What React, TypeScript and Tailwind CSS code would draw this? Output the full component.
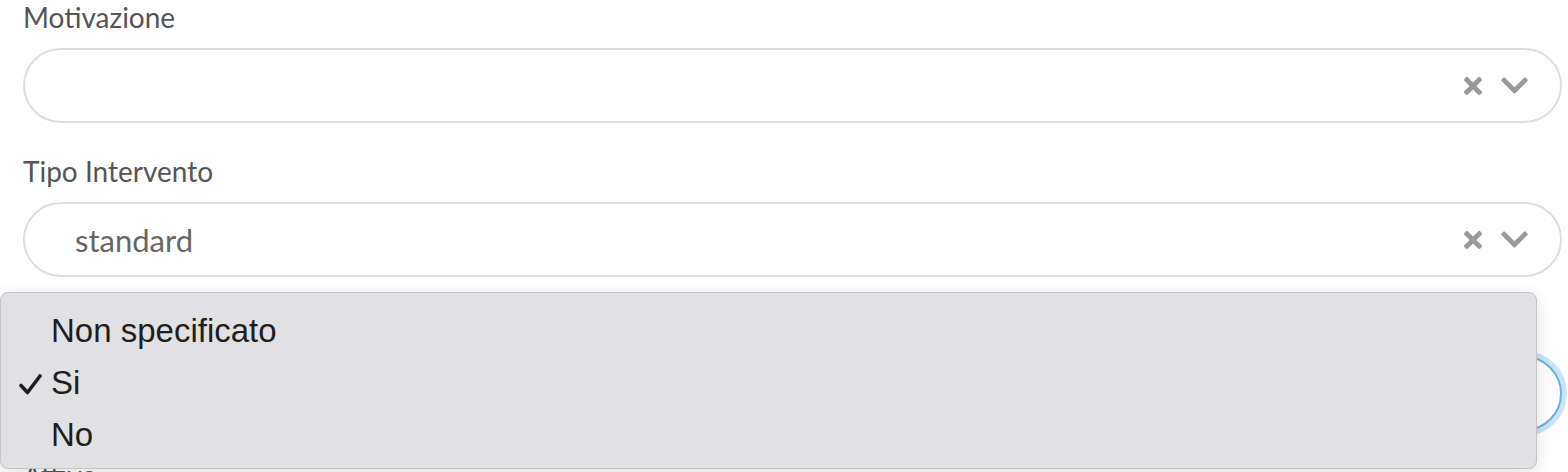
import { FaTimes, FaChevronDown } from 'react-icons/fa';

const lato = { fontFamily: 'Lato, "Open Sans", sans-serif' };

function SelectField({ label, value, focused }: { label: string; value?: string; focused?: boolean }) {
  return (
    <div className="mb-[31px]">
      <div className="text-[28px] leading-[34px] text-[#555] mb-[14px]">{label}</div>
      <div
        className={`h-[75px] rounded-full border-2 bg-white flex items-center pl-[50px] pr-[30px] ${
          focused ? 'border-[#6ab0e0] shadow-[0_0_0_5px_rgba(102,175,233,0.35)]' : 'border-[#dedede]'
        }`}
      >
        <span className="flex-1 text-[31px] text-[#666] pt-[2px]">{value}</span>
        {!focused && (
          <div className="flex items-center gap-[13px] text-[#999]">
            <FaTimes size={26} />
            <FaChevronDown size={31} />
          </div>
        )}
      </div>
    </div>
  );
}

export default function App() {
  return (
    <div className="relative w-[1568px] h-[472px] overflow-hidden bg-white" style={lato}>
      <div className="pl-[23px] pr-[6px]">
        <SelectField label="Motivazione" />
        <SelectField label="Tipo Intervento" value="standard" />
        <SelectField label="Attivo" focused />
        <div className="text-[28px] leading-[34px] text-[#555] -mt-[4px]">Attivo</div>
      </div>

      {/* native select menu */}
      <div
        className="absolute left-0 top-[292px] w-[1537px] h-[177px] rounded-[8px] bg-[#e1e1e3] border border-[#c4c4c4] shadow-[0_4px_18px_rgba(0,0,0,0.12)] pt-[12px] text-[#1e1e1e]"
        style={{ fontFamily: '"Liberation Sans", Arial, sans-serif' }}
      >
        {[
          { t: 'Non specificato', c: false },
          { t: 'Si', c: true },
          { t: 'No', c: false },
        ].map((o) => (
          <div key={o.t} className="relative h-[52px] flex items-center pl-[50px] text-[33px]">
            {o.c && (
              <svg className="absolute left-[18px] top-[17px]" width="23" height="21" viewBox="0 0 23 21">
                <path d="M2 11.5 L8.5 18.5 L21 2" fill="none" stroke="#1e1e1e" strokeWidth="3.6" strokeLinecap="round" strokeLinejoin="round" />
              </svg>
            )}
            {o.t}
          </div>
        ))}
      </div>
    </div>
  );
}
